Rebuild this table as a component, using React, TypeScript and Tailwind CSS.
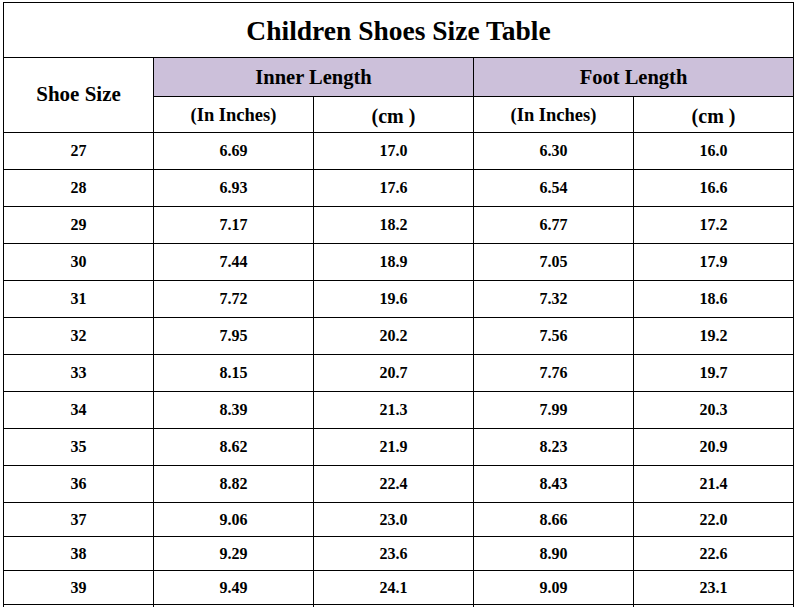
const rows = [
  ["27", "6.69", "17.0", "6.30", "16.0"],
  ["28", "6.93", "17.6", "6.54", "16.6"],
  ["29", "7.17", "18.2", "6.77", "17.2"],
  ["30", "7.44", "18.9", "7.05", "17.9"],
  ["31", "7.72", "19.6", "7.32", "18.6"],
  ["32", "7.95", "20.2", "7.56", "19.2"],
  ["33", "8.15", "20.7", "7.76", "19.7"],
  ["34", "8.39", "21.3", "7.99", "20.3"],
  ["35", "8.62", "21.9", "8.23", "20.9"],
  ["36", "8.82", "22.4", "8.43", "21.4"],
  ["37", "9.06", "23.0", "8.66", "22.0"],
  ["38", "9.29", "23.6", "8.90", "22.6"],
  ["39", "9.49", "24.1", "9.09", "23.1"],
];

export default function App() {
  return (
    <div className="w-[795px] h-[607px] overflow-hidden bg-white pl-[3px] pt-[2px] font-['Liberation_Serif',_'Times_New_Roman',_serif] font-bold text-black">
      <table className="border-collapse table-fixed w-[791px]">
        <colgroup>
          <col className="w-[150px]" />
          <col className="w-[160px]" />
          <col className="w-[160px]" />
          <col className="w-[160px]" />
          <col className="w-[160px]" />
        </colgroup>
        <tbody>
          <tr className="h-[55px]">
            <td colSpan={5} className="border border-black text-center text-[27.5px] p-0 pt-[1px]">
              Children Shoes Size Table
            </td>
          </tr>
          <tr className="h-[39px]">
            <td rowSpan={2} className="border border-black text-center text-[21px] p-0">
              Shoe Size
            </td>
            <td colSpan={2} className="border border-black bg-[#ccc0da] text-center text-[20.5px] p-0">
              Inner Length
            </td>
            <td colSpan={2} className="border border-black bg-[#ccc0da] text-center text-[20.5px] p-0">
              Foot Length
            </td>
          </tr>
          <tr className="h-[36px]">
            <td className="border border-black text-center text-[18.5px] p-0 pt-[2px]">(In Inches)</td>
            <td className="border border-black text-center text-[20px] p-0 pt-[2px]">(cm )</td>
            <td className="border border-black text-center text-[18.5px] p-0 pt-[2px]">(In Inches)</td>
            <td className="border border-black text-center text-[20px] p-0 pt-[2px]">(cm )</td>
          </tr>
          {rows.map((r, i) => (
            <tr key={r[0]} className={i < 10 ? "h-[37px]" : "h-[34px]"}>
              {r.map((c, j) => (
                <td key={j} className="border border-black text-center text-[16px] p-0">
                  {c}
                </td>
              ))}
            </tr>
          ))}
          <tr className="h-[34px]">
            {[0, 1, 2, 3, 4].map((j) => (
              <td key={j} className="border border-black p-0"></td>
            ))}
          </tr>
        </tbody>
      </table>
    </div>
  );
}
